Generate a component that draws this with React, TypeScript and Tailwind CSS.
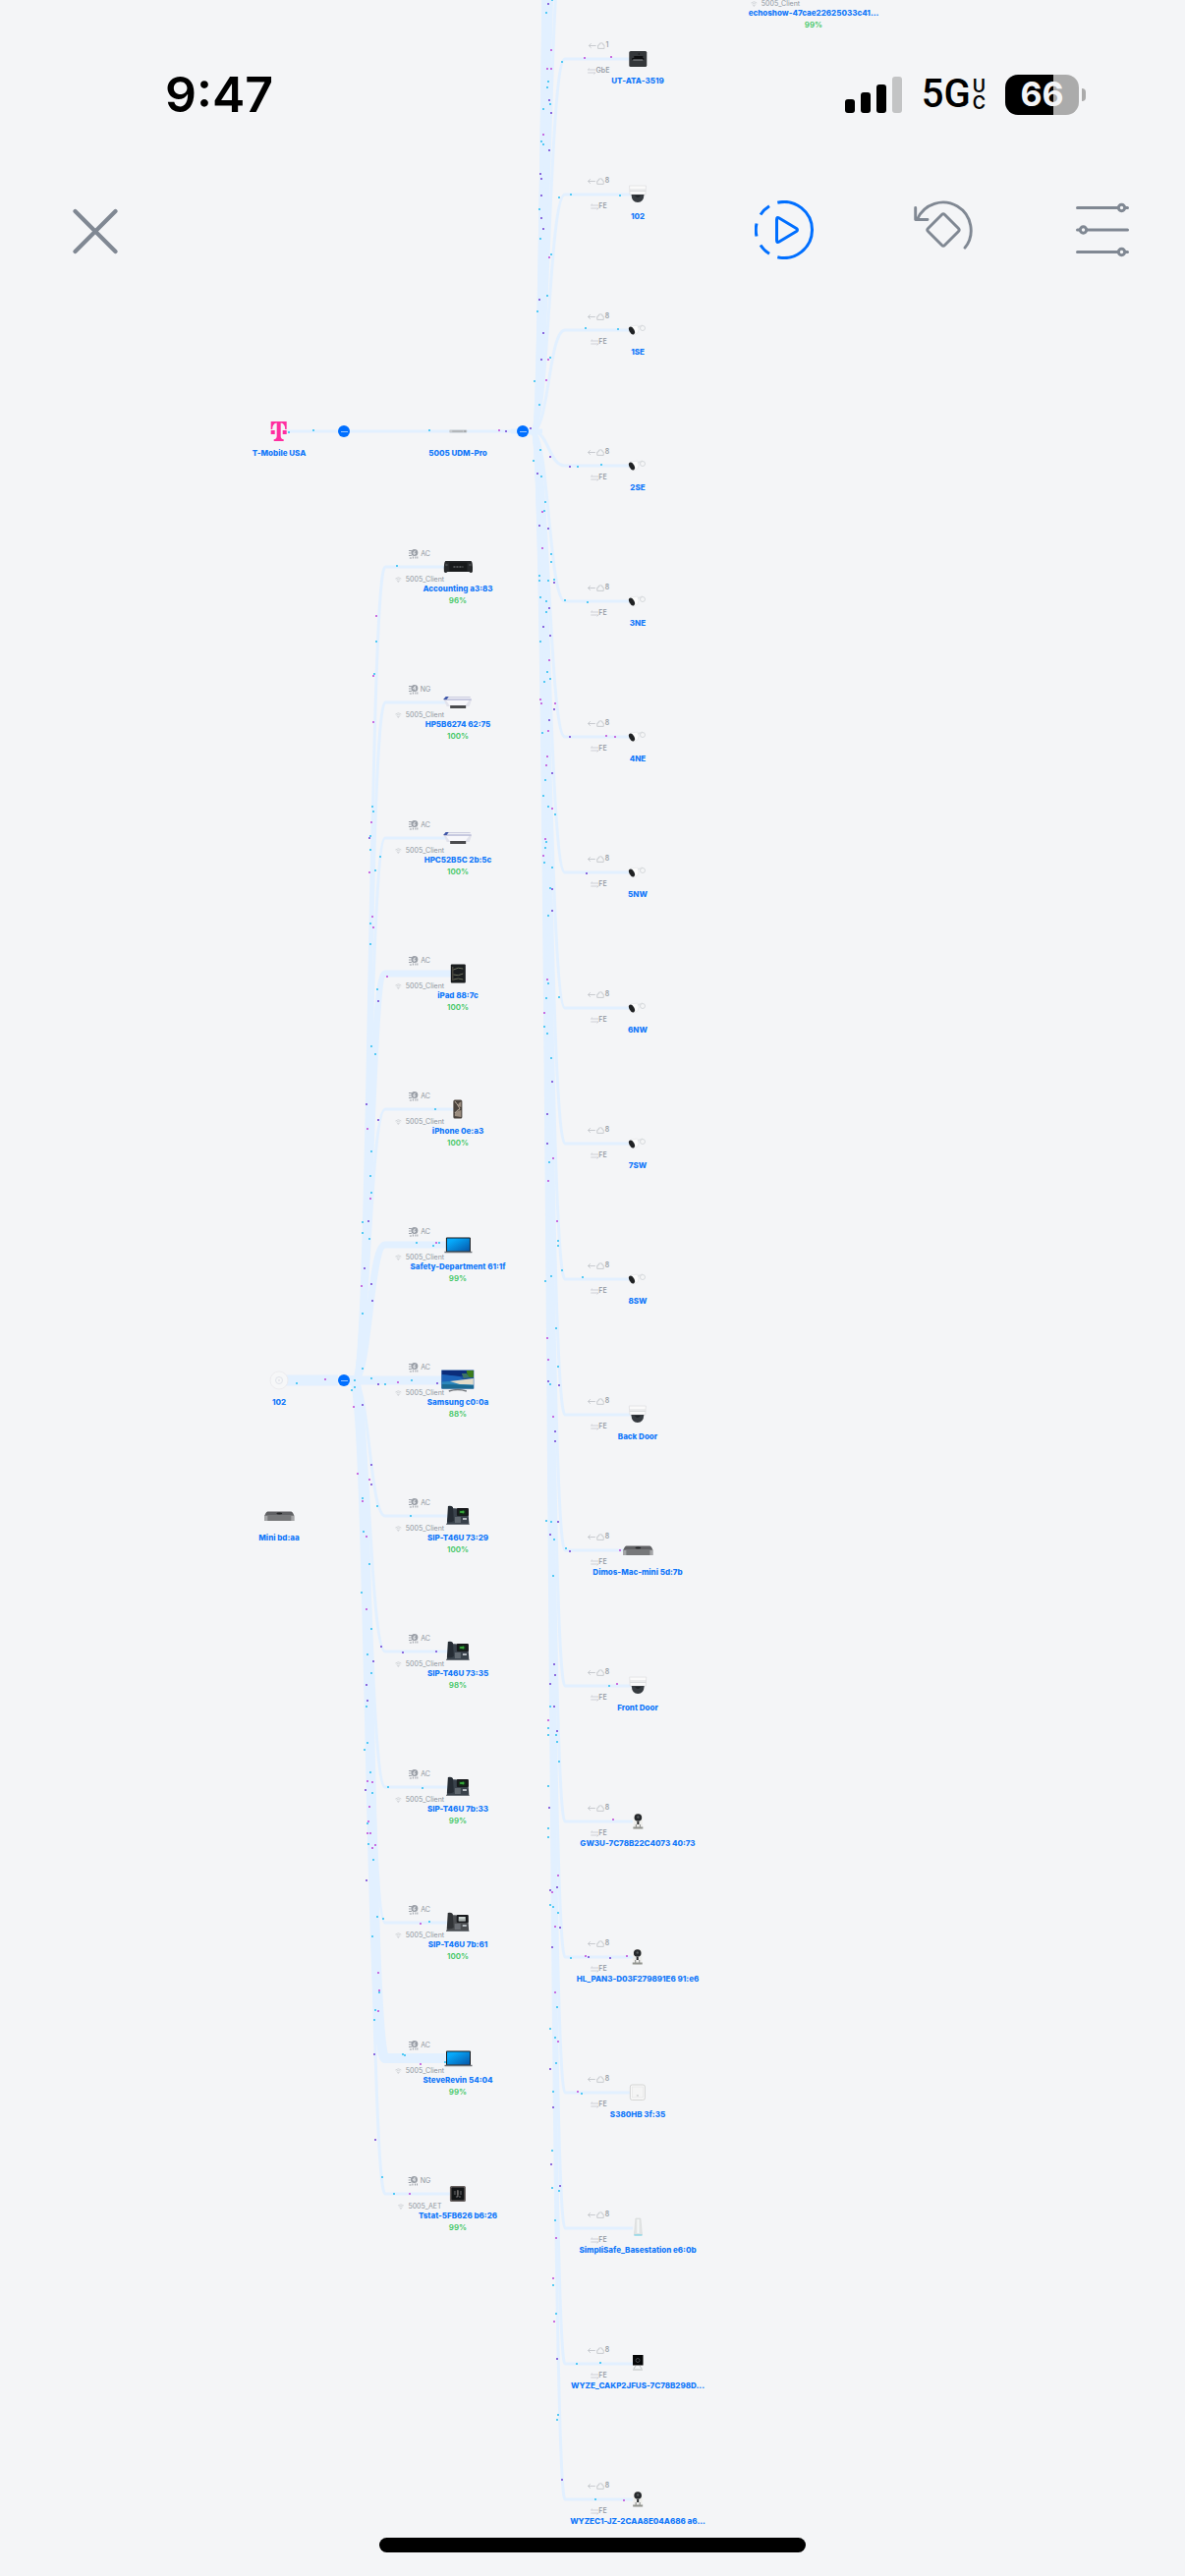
import type { CSSProperties, ReactNode } from "react";

type Kind =
  | "tmobile" | "gateway" | "ap" | "mini" | "console" | "printer" | "ipad" | "iphone"
  | "laptop" | "tv" | "phone" | "phoneGray" | "tstat" | "ata" | "dome" | "bullet"
  | "wyze" | "hub" | "base" | "wyzeBlack" | "none";

interface Wireless { band?: string; channel?: string; ssid: string }
interface Wired { port: string; speed: string }
interface NodeData {
  name: string;
  kind: Kind;
  x: number;
  y: number;
  score?: string;
  wireless?: Wireless;
  wired?: Wired;
  width?: number;
}

const ROW = 138;

const wifiClients: NodeData[] = (
  [
    ["Accounting a3:83", "console", "96%", "AC", 3],
    ["HP5B6274 62:75", "printer", "100%", "NG", 3],
    ["HPC52B5C 2b:5c", "printer", "100%", "AC", 3],
    ["iPad 88:7c", "ipad", "100%", "AC", 7],
    ["iPhone 0e:a3", "iphone", "100%", "AC", 3],
    ["Safety-Department 61:1f", "laptop", "99%", "AC", 7],
    ["Samsung c0:0a", "tv", "88%", "AC", 9],
    ["SIP-T46U 73:29", "phone", "100%", "AC", 3],
    ["SIP-T46U 73:35", "phone", "98%", "AC", 3],
    ["SIP-T46U 7b:33", "phone", "99%", "AC", 3],
    ["SIP-T46U 7b:61", "phoneGray", "100%", "AC", 3],
    ["SteveRevin 54:04", "laptop", "99%", "AC", 10],
    ["Tstat-5FB626 b6:26", "tstat", "99%", "NG", 3],
  ] as [string, Kind, string, string, number][]
).map(([name, kind, score, band, width], i) => ({
  name, kind, score, width,
  x: 466,
  y: 577 + ROW * i,
  wireless: { band, channel: band === "NG" ? "4" : "6", ssid: kind === "tstat" ? "5005_AET" : "5005_Client" },
}));

const wiredClients: NodeData[] = (
  [
    ["UT-ATA-3519", "ata"],
    ["102", "dome"],
    ["1SE", "bullet"],
    ["2SE", "bullet"],
    ["3NE", "bullet"],
    ["4NE", "bullet"],
    ["5NW", "bullet"],
    ["6NW", "bullet"],
    ["7SW", "bullet"],
    ["8SW", "bullet"],
    ["Back Door", "dome"],
    ["Dimos-Mac-mini 5d:7b", "mini"],
    ["Front Door", "dome"],
    ["GW3U-7C78B22C4073 40:73", "wyze"],
    ["HL_PAN3-D03F279891E6 91:e6", "wyze"],
    ["S380HB 3f:35", "hub"],
    ["SimpliSafe_Basestation e6:0b", "base"],
    ["WYZE_CAKP2JFUS-7C78B298D...", "wyzeBlack"],
    ["WYZEC1-JZ-2CAA8E04A686 a6...", "wyze"],
  ] as [string, Kind][]
).map(([name, kind], i) => ({
  name, kind,
  x: 649,
  y: 60 + ROW * i,
  width: 3,
  wired: i === 0 ? { port: "1", speed: "GbE" } : { port: "8", speed: "FE" },
}));

const roots: NodeData[] = [
  { name: "T-Mobile USA", kind: "tmobile", x: 284, y: 439 },
  { name: "5005 UDM-Pro", kind: "gateway", x: 466, y: 439 },
  { name: "102", kind: "ap", x: 284, y: 1405 },
  { name: "Mini bd:aa", kind: "mini", x: 284, y: 1543 },
  {
    name: "echoshow-47cae22625033c41...", kind: "none", x: 828, y: -9, score: "99%",
    wireless: { ssid: "5005_Client" },
  },
];

const toggles: [number, number, string][] = [
  [350, 439, "Collapse T-Mobile USA"],
  [532, 439, "Collapse 5005 UDM-Pro"],
  [350, 1405, "Collapse 102"],
];

const offscreen: [number, number][] = [
  [-78, 3], [-216, 3], [-354, 3], [-630, 3], [-1000, 7], [-1500, 4],
];

const branch = (x0: number, y0: number, x1: number, y1: number, end: number) => {
  const mid = (x0 + x1) / 2;
  return `M${x0 - 6} ${y0}H${x0}C${mid} ${y0} ${mid} ${y1} ${x1} ${y1}H${end}`;
};

const cyan: [number, number][] = [
  [556,13],[562,0],[558,83],[557,89],[560,106],[553,111],[551,144],[553,147],[549,213],[550,243],[561,259],[557,301],[547,317],[560,364],[544,388],[549,412],[572,63],[581,198],[569,201],[631,199],[596,334],[629,335],
  [550,458],[543,469],[551,485],[555,511],[554,520],[561,564],[561,572],[549,586],[549,591],[558,591],[564,590],[550,608],[556,612],[556,623],[550,653],[588,475],[612,473],[575,611],[598,613],
  [557,684],[560,691],[554,694],[552,746],[555,794],[553,810],[558,821],[565,829],[556,857],[555,863],[554,878],[562,883],[560,904],[558,932],[558,1001],[556,1016],[569,1015],[554,1045],[557,1052],[561,1077],
  [383,653],[381,686],[379,821],[380,826],[377,851],[377,865],[387,872],[382,886],[377,940],[377,961],[384,1007],[378,1065],[382,1073],[443,1129],
  [378,1172],[377,1197],[378,1214],[369,1244],[369,1255],[376,1261],[369,1337],[369,1393],[378,1403],[392,1409],[419,1405],[361,1405],[361,1412],[358,1415],[369,1525],[384,1533],[370,1559],[376,1592],[368,1621],[378,1658],[418,1543],[424,1265],[441,1268],[447,1265],[302,1408],
  [559,1183],[568,1263],[568,1268],[572,1293],[561,1299],[555,1304],[566,1352],[568,1391],[560,1409],[556,1548],[561,1549],[564,1567],[563,1604],[576,1576],[593,1300],
  [560,1737],[558,1759],[558,1766],[566,1766],[567,1773],[569,1793],[558,1818],[558,1861],[558,1870],[560,1939],[563,1941],[568,1947],[567,2043],[560,2065],[565,2074],[566,2100],[563,2129],[620,1716],[581,1993],[592,2131],
  [562,2189],[569,2230],[562,2227],[565,2260],[563,2326],[566,2355],[568,2458],[567,2463],[587,2406],[611,2405],[606,2544],
  [374,1684],[378,1703],[373,1737],[374,1774],[371,1781],[377,1804],[379,1825],[374,1856],[375,1877],[380,1893],[384,1951],[390,1953],[379,1971],[386,2028],[382,2046],[381,2056],[389,2216],[395,1819],[430,1820],[437,1956],[410,2091],[412,2092],[453,2099],[401,2233],
  [294,440],[319,438],[437,438],[404,576],
];
const violet: [number, number][] = [
  [558,4],[559,102],[561,115],[559,153],[550,177],[551,182],[551,199],[551,222],[553,233],[549,305],[553,339],[551,366],
  [540,436],[560,465],[547,482],[549,535],[558,538],[564,593],[559,619],[553,638],[560,647],[580,475],[564,722],[559,733],[562,787],[562,905],[562,927],[562,1101],[557,1134],[580,750],[597,889],
  [376,853],[385,1019],[373,1124],[385,1140],[375,1243],[371,1291],[378,1307],[379,1324],[385,1409],[445,1408],[369,1430],[378,1491],[378,1511],[388,1676],
  [557,1164],[558,1406],[569,1410],[565,1457],[565,1467],[568,1549],[560,1562],[580,1579],[564,1694],[565,1705],[560,1714],[564,1737],[567,1762],[559,1840],[567,1921],[560,1924],[570,1962],[562,1982],[560,2106],[599,1992],[621,1993],
  [563,2145],[561,2203],[570,2225],[567,2401],[572,2524],[380,1691],[373,1715],[374,1731],[372,1822],[373,1914],[381,2091],[382,2178],[444,1681],[410,1682],[515,439],
];
const magenta: [number, number][] = [
  [561,51],[557,70],[561,70],[553,137],[559,262],[558,366],[556,387],[595,59],[622,58],[552,521],[552,558],[559,672],[550,712],[551,716],[565,716],[558,744],[557,770],[556,779],[562,823],[555,854],[553,871],[557,997],[554,1031],[617,749],[626,750],
  [380,688],[380,735],[378,837],[376,888],[379,933],[380,944],[394,994],[374,1149],[377,1220],[368,1309],[405,1407],[360,1432],[364,1500],[376,1506],[369,1528],[373,1564],[373,1638],[444,1265],[331,1404],
  [563,1179],[558,1202],[567,1243],[557,1362],[558,1384],[563,1442],[631,1578],[558,1751],[568,1909],[562,1926],[565,1961],[565,2028],[568,2078],[628,1714],[624,1852],[596,1991],[638,1991],[588,2129],
  [566,2278],[563,2319],[564,2363],[635,2545],[374,1813],[379,1814],[376,1839],[375,1854],[374,1866],[377,1866],[379,1881],[382,1878],[385,2008],[386,2026],[385,2047],[428,1958],[428,2101],[417,2233],[508,438],[383,627],
];

const dots = (points: [number, number][]) =>
  points.map(([x, y]) => `M${x - 1} ${y - 1}h2v2h-2z`).join("");

function Links() {
  return (
    <svg className="absolute left-0 top-0 h-full w-full" aria-hidden="true">
      <g fill="none" stroke="#e2f0ff">
        <path d="M292 439H526" strokeWidth="3" />
        <path d="M290 1405H344" strokeWidth="11" />
        <path d="M520 439H552" strokeWidth="5" />
        {offscreen.map(([y, w]) => (
          <path key={y} d={branch(542, 439, 575, y, 640)} strokeWidth={w} />
        ))}
        {wiredClients.map((n) => (
          <path key={n.name} d={branch(542, 439, 575, n.y, 644)} strokeWidth={n.width} />
        ))}
        {wifiClients.map((n) => (
          <path key={n.name} d={branch(360, 1405, 392, n.y, 462)} strokeWidth={n.width} />
        ))}
      </g>
      <path d={dots(cyan)} fill="#3cc3f2" opacity="0.85" />
      <path d={dots(violet)} fill="#7b52d9" opacity="0.85" />
      <path d={dots(magenta)} fill="#c14fdb" opacity="0.8" />
    </svg>
  );
}

function Deskphone({ gray }: { gray?: boolean }) {
  return (
    <>
      <path d="M-8 -8L10 -7Q11 0 11.500 9H-11.500Z" fill={gray ? "#4a4d50" : "#39424b"} />
      <rect x="-1" y="-8" width="12" height="8" rx="1" fill="#17191c" />
      <rect x="1" y="-6" width="7" height="4.500" fill={gray ? "#c9d2d0" : "#123019"} />
      <path d={gray ? "M1 -3h7" : "M2 -4l4 -1v2z"} fill="#53d84a" stroke={gray ? "#8d9694" : "#35a63a"} />
      <path d="M-10 -10q3 -1 5 1l1 14q-3 2 -7 1z" fill={gray ? "#303336" : "#252c34"} />
      <path d="M-3 2h6M-3 4h6M-3 6h6" stroke="#8a9097" strokeWidth="1" />
      <path d="M5 3h4" stroke="#b4bac0" strokeWidth="2" />
      <path d="M-11.500 8.500H11.500" stroke="#6d737a" strokeWidth="1" />
    </>
  );
}

const art: Record<Kind, ReactNode> = {
  none: null,
  tmobile: (
    <g fill="#ff2ea0">
      <path d="M-8 -10H8V-2H6.500Q6.500 -8 2 -8.500V5Q2 8 5 8.300V10H-5V8.300Q-2 8 -2 5V-8.500Q-6.500 -8 -6.500 -2H-8Z" />
      <path d="M-8 -1h4v4h-4zM4 -1h4v4h-4z" />
    </g>
  ),
  gateway: (
    <>
      <rect x="-9" y="-1.500" width="18" height="3" rx="1" fill="#c6cacd" />
      <path d="M-6 0H5" stroke="#a0a4a8" strokeWidth="1" />
      <path d="M6 0h2" stroke="#7d8185" />
    </>
  ),
  ap: (
    <>
      <circle r="9" fill="#f6f7f8" stroke="#ececef" />
      <circle r="3.500" fill="none" stroke="#e0e3ea" />
      <circle r="0.800" fill="#d3d6dd" />
    </>
  ),
  mini: (
    <>
      <path d="M-12 -4.500H12Q14 -4 15 0H-15Q-14 -4 -12 -4.500Z" fill="#606164" />
      <path d="M-15 0Q-15 -1 -14 -1H14Q15 -1 15 0V5H-15Z" fill="#77787a" />
      <path d="M-15 0H-12V5H-15ZM12 0H15V5H12Z" fill="#a4a5a7" />
      <ellipse cy="-2.500" rx="3" ry="1" fill="#252628" />
    </>
  ),
  console: (
    <>
      <path d="M-13 -6H13Q15 -5 14.500 5Q13 7 11 5H-11Q-13 7 -14.500 5Q-15 -5 -13 -6Z" fill="#26282a" />
      <rect x="-9" y="-4.500" width="18" height="9" fill="#17191a" />
      <path d="M-5 0H5" stroke="#85888a" strokeDasharray="2 1" />
      <circle cx="-12" cy="-2" r="1.300" fill="#46494b" />
      <circle cx="12" cy="-2" r="1.300" fill="#46494b" />
    </>
  ),
  printer: (
    <>
      <path d="M-14 -3H14.500L12 4H-11Z" fill="#e2e3ec" />
      <path d="M-12 -2.500H12L8 3H-8Z" fill="#f7f7fb" />
      <path d="M-12 -5.500H13L14.500 -3H-14Z" fill="#eff0f6" />
      <path d="M-11 -5.500H13" stroke="#c3c4da" strokeWidth="0.800" />
      <path d="M-14 -3H14" stroke="#9a9dc6" strokeWidth="0.900" />
      <path d="M-14.500 -3L-12 -6H-9L-11 -3Z" fill="#3f57a8" />
      <rect x="-7.500" y="3" width="16" height="3" fill="#4a4b4e" />
    </>
  ),
  ipad: (
    <>
      <rect x="-7.500" y="-9.500" width="15" height="19" rx="1" fill="#1b1e20" />
      <path d="M-5 -4Q0 -7 5 -5M-5 1Q0 3 5 0M-5 6Q0 4 5 6" fill="none" stroke="#6c705d" strokeWidth="1" />
      <path d="M-5.500 -7V7" stroke="#5a564a" strokeWidth="1" />
    </>
  ),
  iphone: (
    <>
      <rect x="-4.500" y="-9.500" width="9" height="19" rx="1.500" fill="#4a433d" />
      <path d="M3.500 -8Q-3 -4 3.500 -2ZM3.500 1Q-4 2 -3 7L3.500 8Z" fill="#9c8e80" />
      <path d="M-3 -8Q2 -2 2 0Q-1 1 -3 4" fill="none" stroke="#c1b4a6" strokeWidth="1" />
    </>
  ),
  laptop: (
    <>
      <rect x="-12.500" y="-7.500" width="25" height="15" rx="1" fill="#16191d" />
      <rect x="-11.500" y="-6.500" width="23" height="13" fill="url(#screen)" />
      <path d="M-14 7.500H14" stroke="#6d7176" strokeWidth="1.500" />
    </>
  ),
  tv: (
    <>
      <rect x="-16.500" y="-10.500" width="33" height="19" fill="#1a4f9c" />
      <path d="M-16 -10H16V-5L0 -4L-16 -6Z" fill="#0b2c7a" />
      <path d="M-16 -6L2 -4L6 0L-16 2Z" fill="#1c62b8" />
      <path d="M9 -10H16V-3H12Q9 -5 9 -10Z" fill="#3c7d1c" />
      <path d="M4 -7L9 -7L12 -3L6 -2Z" fill="#3d7565" />
      <path d="M-16 1.500L3 0L16 -2V8H-16Z" fill="#2a86bd" />
      <path d="M-8 1L16 -2V4.500L2 4Z" fill="#e2dbc8" />
      <path d="M-16 4Q-4 4 16 5V8.500H-16Z" fill="#1b6a92" />
      <path d="M-9 11Q0 8 9 11" fill="none" stroke="#74787d" strokeWidth="1.500" />
    </>
  ),
  phone: <Deskphone />,
  phoneGray: <Deskphone gray />,
  tstat: (
    <>
      <rect x="-8" y="-8" width="16" height="16" rx="1.500" fill="#67605f" />
      <rect x="-6.500" y="-6.500" width="13" height="13" rx="1" fill="#121416" />
      <path d="M-4 -2H4M-4 0H4M-2 3H3" stroke="#6e6f72" strokeWidth="1" strokeDasharray="2 1" />
      <path d="M0 -4V3" stroke="#8b8580" strokeWidth="1" />
    </>
  ),
  ata: (
    <>
      <rect x="-9" y="-8" width="18" height="16" rx="1.500" fill="#34373a" />
      <path d="M-6 0H6M-4 -2H5" stroke="#0d0e10" strokeWidth="2" />
      <path d="M-5 1H5" stroke="#93979a" strokeWidth="1" />
      <circle cy="-5" cx="1" r="0.700" fill="#141618" />
    </>
  ),
  dome: (
    <>
      <path d="M-8.500 -9H8.500L8 0H-8Z" fill="#fafafa" stroke="#dfe0e2" strokeWidth="0.800" />
      <path d="M-8 -5H8M-8 -3.500H8" stroke="#cfd1d4" strokeWidth="0.700" />
      <path d="M-6.500 0H6.500Q6 8 0 8Q-6 8 -6.500 0Z" fill="#363b40" />
      <path d="M-3 1Q0 5 3 1" fill="#1f2327" />
    </>
  ),
  bullet: (
    <>
      <path d="M-7 -4L0 -5Q2 0 0 3L-4 5Z" fill="#fcfcfc" stroke="#e3e4e5" strokeWidth="0.600" />
      <path d="M0 -3L5 -5" stroke="#e3e6e8" strokeWidth="1.500" />
      <circle cx="5" cy="-2" r="2.500" fill="#f5f6f7" stroke="#ced2d5" strokeWidth="0.800" />
      <ellipse cx="-6" cy="0.500" rx="2.500" ry="4.200" transform="rotate(-30 -6 .5)" fill="#202224" />
    </>
  ),
  wyze: (
    <>
      <rect x="-4.500" y="-8" width="9" height="16" rx="2" fill="#eeeeec" />
      <circle cy="-4" r="3.800" fill="#25282b" />
      <circle cy="-4.500" r="1.200" fill="#575c5e" />
      <path d="M0 0V3" stroke="#26292c" strokeWidth="2" />
      <path d="M-2 3V6M2 3V6" stroke="#838583" />
      <path d="M-5 6.500H5" stroke="#92948f" strokeWidth="2" />
    </>
  ),
  hub: (
    <>
      <rect x="-7.500" y="-8" width="15" height="15.500" rx="2" fill="#f8f8f8" stroke="#d3d4d3" />
      <rect x="-5.500" y="-6" width="11" height="11" fill="#f4f4f4" stroke="#e4e4e4" strokeWidth="0.600" />
      <path d="M-1 3H1" stroke="#babdbf" />
    </>
  ),
  base: (
    <>
      <path d="M-2.500 -10H2.500L4 7H-4Z" fill="#e2e4e4" stroke="#d3d7d7" strokeWidth="0.600" />
      <path d="M0 -9V5" stroke="#f6f8f8" strokeWidth="2" />
      <path d="M-4 7H4" stroke="#64d2ea" strokeWidth="1.200" />
    </>
  ),
  wyzeBlack: (
    <>
      <rect x="-5" y="-9" width="10.500" height="10.500" fill="#050607" />
      <circle cy="-3.500" r="2" fill="none" stroke="#45494d" strokeWidth="1" />
      <path d="M-2 2L-4 5M2 2L4 5" stroke="#bfc3c4" />
      <path d="M-5 6H5" stroke="#cdcfcf" strokeWidth="1.500" />
    </>
  ),
};

function DeviceIcon({ kind }: { kind: Kind }) {
  return (
    <svg className="h-[30px] w-9" viewBox="-18 -15 36 30" aria-hidden="true">
      {art[kind]}
    </svg>
  );
}

const at = (x: number, y: number): CSSProperties => ({ left: x, top: y });

function WirelessMeta({ x, y, data }: { x: number; y: number; data: Wireless }) {
  return (
    <div
      className="absolute flex -translate-x-1/2 flex-col items-center gap-[14px] text-[7px] leading-[12px] text-[#8f959e]"
      style={at(x - 39, y - 19)}
    >
      <span className="flex h-3 items-center gap-0.5">
        {data.band && (
          <svg className="h-[10px] w-[10px]" viewBox="0 0 10 10" fill="none" stroke="#9a9fa7" aria-hidden="true">
            <path d="M0 1.500h3M0 4h2M0 6.500h3M1 9h2M4.500 7.500v2M7 7.500v2M9 7.500v2" strokeWidth="1" />
            <circle cx="6" cy="3.500" r="3.500" fill="#9a9fa7" stroke="none" />
            <path d={data.channel === "4" ? "M6.500 5.500v-4l-2 2.500h3" : "M7 2Q5 2 5 4Q5 5.500 6 5.500Q7 5 6.500 4H5"} stroke="#f4f5f7" strokeWidth="0.800" />
          </svg>
        )}
        {data.band}
      </span>
      <span className="flex items-center gap-1">
        <svg className="h-[6px] w-[7px]" viewBox="0 0 7 6" fill="none" stroke="#cdd0d4" aria-hidden="true">
          <path d="M.5 2Q3.500 -.6 6.500 2M1.500 3.200Q3.500 1.400 5.500 3.200M2.600 4.300h1.800L3.500 5.500z" strokeWidth="0.800" />
        </svg>
        {data.ssid}
      </span>
    </div>
  );
}

function WiredMeta({ x, y, data }: { x: number; y: number; data: Wired }) {
  return (
    <div
      className="absolute flex -translate-x-1/2 flex-col items-center gap-[14px] text-[7px] font-medium leading-[12px] text-[#8f959e]"
      style={at(x - 40, y - 20)}
    >
      <span className="flex items-center gap-px">
        <svg className="h-[7px] w-[17px]" viewBox="0 0 17 7" fill="none" stroke="#c3c6cb" strokeWidth="0.900" aria-hidden="true">
          <path d="M8 3.500H.7M3 1.200L.7 3.500L3 5.800" />
          <path d="M10 6.400V3L11.500 2.700V1.300Q13.500 .3 15.200 1.300V2.700L16.500 3V6.400Z" />
        </svg>
        {data.port}
      </span>
      <span className="flex items-center">
        <svg className="h-[7px] w-[9px]" viewBox="0 0 9 7" fill="none" stroke="#c9ccd1" strokeWidth="0.900" aria-hidden="true">
          <path d="M8.500 2H.7L2.200 .6M.5 5H8.300L6.800 6.400" />
        </svg>
        {data.speed}
      </span>
    </div>
  );
}

function TopologyNode({ node }: { node: NodeData }) {
  return (
    <>
      {node.wireless && <WirelessMeta x={node.x} y={node.y} data={node.wireless} />}
      {node.wired && <WiredMeta x={node.x} y={node.y} data={node.wired} />}
      <div
        className="absolute flex -translate-x-1/2 flex-col items-center whitespace-nowrap"
        style={at(node.x, node.y - 15)}
      >
        <DeviceIcon kind={node.kind} />
        <span className="text-[8px] font-extrabold leading-[14px] text-[#1178fa]">{node.name}</span>
        {node.score && <span className="text-[8px] font-semibold leading-[10px] text-[#41c765]">{node.score}</span>}
      </div>
    </>
  );
}

function StatusBar() {
  return (
    <div className="flex h-48 items-center justify-between pl-[168px] pr-[101px] text-black">
      <time className="text-[50px] font-semibold leading-none">9:47</time>
      <div className="flex items-center gap-5">
        <div className="flex items-end gap-1.5" role="img" aria-label="Signal strength 3 of 4">
          <span className="h-[14px] w-[10px] rounded-[3px] bg-black" />
          <span className="h-[21px] w-[10px] rounded-[3px] bg-black" />
          <span className="h-[29px] w-[10px] rounded-[3px] bg-black" />
          <span className="h-[37px] w-[10px] rounded-[3px] bg-[#c3c4c5]" />
        </div>
        <div className="flex items-center gap-0.5 font-['Roboto',sans-serif]">
          <span className="text-[40px] font-medium leading-none">5G</span>
          <span className="flex flex-col text-center font-['Inter',sans-serif] text-[18px] font-semibold leading-[17px]">
            <span>U</span>
            <span>C</span>
          </span>
        </div>
        <div className="flex items-center gap-[3px]">
          <div className="flex h-[41px] w-[75px] items-center justify-center rounded-[13px] bg-linear-to-r from-black from-66% to-[#ababab] to-66% text-[34px] font-bold leading-none text-[#f4f5f7]">
            66
          </div>
          <span className="h-[13px] w-1 rounded-r-full bg-[#ababab]" />
        </div>
      </div>
    </div>
  );
}

function Toolbar() {
  return (
    <nav className="flex items-center justify-between pl-[67px] pr-[54px] pt-3">
      <button type="button" aria-label="Close" className="h-[60px] w-[60px]">
        <svg viewBox="0 0 60 60" fill="none" stroke="#808893" strokeWidth="4.200" strokeLinecap="round">
          <path d="M9.500 11L50.500 52M50.500 11L9.500 52" />
        </svg>
      </button>
      <div className="flex items-center gap-[102px]">
        <button type="button" aria-label="Play traffic" className="h-[60px] w-[60px]">
          <svg viewBox="0 0 60 60" fill="none" stroke="#006fff" strokeWidth="3">
            <path d="M23.300 2.300A28.500 28.500 0 1 1 23.300 57.700" />
            <path d="M15 5.700A28.500 28.500 0 0 0 6 14.500M2 23.500A28.500 28.500 0 0 0 2 36.500M6 45.500A28.500 28.500 0 0 0 15 54.300" />
            <path d="M22.500 19.500V40.500Q22.500 43.500 25 42L42.500 31.500Q44.500 30 42.500 28.500L25 18Q22.500 16.500 22.500 19.500Z" strokeLinejoin="round" />
          </svg>
        </button>
        <button type="button" aria-label="Reset view" className="h-[60px] w-[60px]">
          <svg viewBox="0 0 60 60" fill="none" stroke="#808893" strokeWidth="2.900" strokeLinecap="round" strokeLinejoin="round">
            <path d="M1.700 7.500V19.500H14" />
            <path d="M3.600 19A28.500 28.500 0 1 1 52 48.200" />
            <path d="M28.500 14.500Q30 13 31.500 14.500L45.500 28.500Q47 30 45.500 31.500L31.500 45.500Q30 47 28.500 45.500L14.500 31.500Q13 30 14.500 28.500Z" />
          </svg>
        </button>
        <button type="button" aria-label="Filters" className="h-[60px] w-[60px]">
          <svg viewBox="0 0 60 60" fill="#f4f5f7" stroke="#808893" strokeWidth="3" strokeLinecap="round">
            <path d="M4.500 7.500H55.500M4.500 30H55.500M4.500 52.500H55.500" />
            <circle cx="49.500" cy="7.500" r="3.200" />
            <circle cx="10.500" cy="30" r="3.200" />
            <circle cx="49.500" cy="52.500" r="3.200" />
          </svg>
        </button>
      </div>
    </nav>
  );
}

export default function App() {
  return (
    <div className="relative flex min-h-screen flex-col justify-between overflow-hidden bg-[#f4f5f7] font-['Inter',sans-serif]">
      <svg className="absolute h-0 w-0" aria-hidden="true">
        <defs>
          <linearGradient id="screen" x1="0" y1="0" x2="1" y2="1">
            <stop offset="0.200" stopColor="#05a9fb" />
            <stop offset="1" stopColor="#0756a8" />
          </linearGradient>
        </defs>
      </svg>
      <main className="absolute inset-0 overflow-hidden">
        <Links />
        {roots.map((n) => <TopologyNode key={n.name + n.y} node={n} />)}
        {wifiClients.map((n) => <TopologyNode key={n.name} node={n} />)}
        {wiredClients.map((n) => <TopologyNode key={n.name} node={n} />)}
        {toggles.map(([x, y, label]) => (
          <button
            key={label}
            type="button"
            aria-label={label}
            className="absolute flex h-3 w-3 -translate-x-1/2 -translate-y-1/2 items-center justify-center rounded-full bg-[#006fff]"
            style={at(x, y)}
          >
            <span className="h-px w-[7px] bg-[#9cc8ff]" />
          </button>
        ))}
      </main>
      <header className="relative">
        <StatusBar />
        <Toolbar />
      </header>
      <footer className="relative flex justify-center pb-6">
        <div className="h-[15px] w-[36%] rounded-full bg-black" />
      </footer>
    </div>
  );
}
